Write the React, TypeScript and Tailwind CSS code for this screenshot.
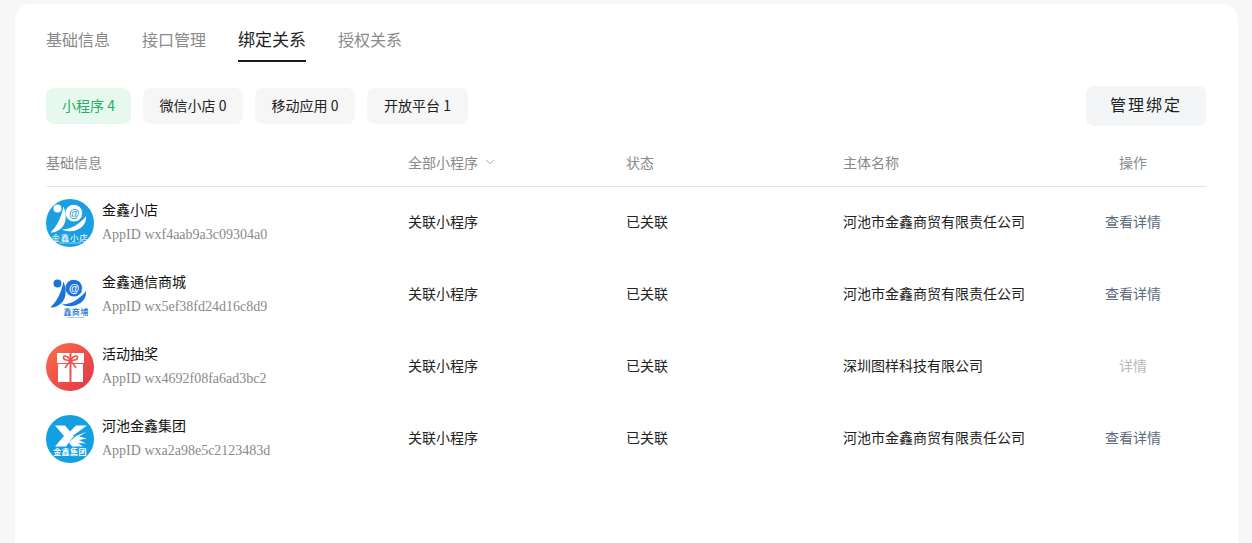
import { ChevronDown } from "lucide-react";

const cjk = "font-['Noto_Sans_CJK_SC','Liberation_Sans',sans-serif]";

function Swirl({ fg, inner }: { fg: string; inner: string }) {
  return (
    <>
      <circle cx="11.5" cy="10.5" r="4" fill={fg} />
      <path d="M17.5 8.5 C21 17 20.5 25 15.5 30 C12.5 33 8 35 4.5 34.5 C7 31.5 10 28.5 12 24.5 C14.5 19.5 16.5 14 17.5 8.5 Z" fill={fg} />
      <path d="M40 18 C41 26 34.5 32 26.5 33 C22.5 33.5 18.5 33 16 31.5 C22 31 27 29.5 31 26.5 C35 23.5 38 21 40 18 Z" fill={fg} />
      <circle cx="28" cy="15" r="8.6" fill={fg} />
      <path d="M26 6.5 C33 5.5 38 11 36 18" stroke={inner} strokeWidth="0.9" fill="none" />
      <circle cx="28" cy="15.5" r="5.6" fill={fg} />
      <text x="28" y="19" textAnchor="middle" fontSize="10.5" fontWeight="700" fill={inner} fontFamily="Liberation Sans, sans-serif">@</text>
    </>
  );
}

function LogoStore() {
  return (
    <svg width="48" height="48" viewBox="0 0 48 48" className="shrink-0">
      <circle cx="24" cy="24" r="24" fill="#1a9fe2" />
      <g transform="translate(0 -1)">
        <Swirl fg="#ffffff" inner="#1a9fe2" />
      </g>
      <text x="24" y="41.5" textAnchor="middle" fontSize="8.5" letterSpacing="0.8" fill="#ffffff" fontFamily="Noto Sans CJK SC, sans-serif">金鑫小店</text>
      <rect x="13" y="43.5" width="22" height="1" fill="#8fd0f2" />
    </svg>
  );
}

function LogoMall() {
  return (
    <svg width="48" height="48" viewBox="0 0 48 48" className="shrink-0">
      <g transform="translate(0 2)">
        <Swirl fg="#1b75d8" inner="#ffffff" />
      </g>
      <text x="30" y="44" textAnchor="middle" fontSize="8" letterSpacing="0.4" fontWeight="500" fill="#1b75d8" fontFamily="Noto Sans CJK SC, sans-serif">鑫商埔</text>
      <rect x="21" y="46" width="17" height="1" fill="#a9c9ee" />
    </svg>
  );
}

function LogoGift() {
  return (
    <svg width="48" height="48" viewBox="0 0 48 48" className="shrink-0">
      <defs>
        <linearGradient id="gift" x1="0" y1="0" x2="1" y2="1">
          <stop offset="0" stopColor="#fb6f4b" />
          <stop offset="1" stopColor="#e23449" />
        </linearGradient>
      </defs>
      <circle cx="24" cy="24" r="24" fill="url(#gift)" />
      <rect x="11" y="10" width="27" height="10" fill="#ffffff" />
      <rect x="12" y="21" width="25" height="18" fill="#ffffff" />
      <rect x="23.5" y="10" width="2" height="29" fill="#ee5050" />
      <path d="M24.5 17 C21 12 17 12 17.5 15 C18 17 21 17.5 24.5 17 C28 12 32 12 31.5 15 C31 17 28 17.5 24.5 17 Z" fill="#ffffff" stroke="#ee5050" strokeWidth="1.5" />
      <path d="M24.5 17 L19 25 M24.5 17 L30 25" stroke="#ee5050" strokeWidth="1.5" />
    </svg>
  );
}

function LogoGroup() {
  return (
    <svg width="48" height="48" viewBox="0 0 48 48" className="shrink-0">
      <circle cx="24" cy="24" r="24" fill="#12a0e2" />
      <g transform="translate(0 1.5)">
        <path d="M9 9 H19 L28 19.5 L20 30 H9 L18 19.5 Z" fill="#ffffff" />
        <path d="M24 15 L30 9 H41 L30 17 L27 19 Z" fill="#ffffff" />
        <path d="M30 19.5 L41 15 L33 20 L41 22 L33 23.5 L40 27 L32 26.5 L37 30 H26 L23 26 Z" fill="#ffffff" />
      </g>
      <text x="24" y="39.5" textAnchor="middle" fontSize="8" letterSpacing="0.4" fontWeight="700" fill="#ffffff" fontFamily="Noto Sans CJK SC, sans-serif">金鑫集团</text>
    </svg>
  );
}

const rows = [
  { logo: <LogoStore />, name: "金鑫小店", id: "AppID wxf4aab9a3c09304a0", type: "关联小程序", status: "已关联", owner: "河池市金鑫商贸有限责任公司", action: "查看详情", muted: false },
  { logo: <LogoMall />, name: "金鑫通信商城", id: "AppID wx5ef38fd24d16c8d9", type: "关联小程序", status: "已关联", owner: "河池市金鑫商贸有限责任公司", action: "查看详情", muted: false },
  { logo: <LogoGift />, name: "活动抽奖", id: "AppID wx4692f08fa6ad3bc2", type: "关联小程序", status: "已关联", owner: "深圳图样科技有限公司", action: "详情", muted: true },
  { logo: <LogoGroup />, name: "河池金鑫集团", id: "AppID wxa2a98e5c2123483d", type: "关联小程序", status: "已关联", owner: "河池市金鑫商贸有限责任公司", action: "查看详情", muted: false },
];

const gridCols = "grid grid-cols-[362px_218px_217px_1fr_146px] items-center";

export default function App() {
  return (
    <div className={`h-[543px] overflow-hidden bg-[#f7f7f7] pt-1 pl-[15px] pr-[14px] ${cjk}`}>
      <div className="h-[539px] rounded-t-2xl bg-white pl-[31px] pr-8">
        <div className="flex h-[58px] items-start gap-8 pt-[22px]">
          <div className="text-base leading-[26px] text-[#8a8a8a]">基础信息</div>
          <div className="text-base leading-[26px] text-[#8a8a8a]">接口管理</div>
          <div className="h-9 border-b-2 border-[#1a1a1a] text-[17px] leading-[26px] text-[#222222]">绑定关系</div>
          <div className="text-base leading-[26px] text-[#8a8a8a]">授权关系</div>
        </div>
        <div className="mt-6 flex h-10 items-center gap-3">
          <div className="flex h-9 w-[85px] items-center justify-center rounded-lg bg-[#e7f8ef] pb-0.5 text-sm text-[#2bab67]">小程序 4</div>
          <div className="flex h-9 w-[100px] items-center justify-center rounded-lg bg-[#f6f6f6] pb-0.5 text-sm text-[#222222]">微信小店 0</div>
          <div className="flex h-9 w-[100px] items-center justify-center rounded-lg bg-[#f6f6f6] pb-0.5 text-sm text-[#222222]">移动应用 0</div>
          <div className="flex h-9 w-[101px] items-center justify-center rounded-lg bg-[#f6f6f6] pb-0.5 text-sm text-[#222222]">开放平台 1</div>
          <div className="ml-auto flex h-10 w-[120px] items-center justify-center rounded-lg bg-[#f3f5f7] pb-1 text-base tracking-[2px] text-[#222222]">管理绑定</div>
        </div>
        <div className={`${gridCols} mt-[10px] h-[51px] border-b border-[#e4e4e4] pt-0.5 text-sm text-[#8a8a8a]`}>
          <div>基础信息</div>
          <div className="flex items-center gap-[5px]">
            全部小程序
            <ChevronDown size={14} strokeWidth={1.3} />
          </div>
          <div>状态</div>
          <div>主体名称</div>
          <div className="text-center">操作</div>
        </div>
        {rows.map((r) => (
          <div key={r.id} className={`${gridCols} h-[72px] text-sm text-[#222222]`}>
            <div className="flex items-center gap-2">
              {r.logo}
              <div className="flex flex-col">
                <div className="h-6 text-sm leading-5 text-[#111111]">{r.name}</div>
                <div className="h-6 font-['Liberation_Serif',serif] text-sm leading-6 text-[#8a8a8a]">{r.id}</div>
              </div>
            </div>
            <div className="pb-1">{r.type}</div>
            <div className="pb-1">{r.status}</div>
            <div className="pb-1">{r.owner}</div>
            <div className={`pb-1 text-center ${r.muted ? "text-[#b8b8b8]" : "text-[#5d6b80]"}`}>{r.action}</div>
          </div>
        ))}
      </div>
    </div>
  );
}
